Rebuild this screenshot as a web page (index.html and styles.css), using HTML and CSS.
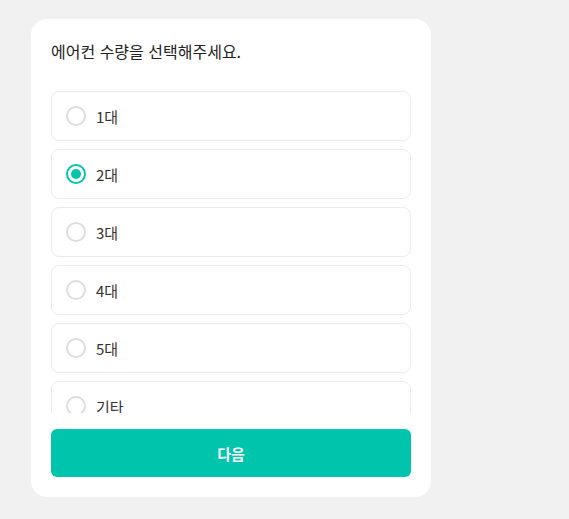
FILE: index.html
```html
<!DOCTYPE html>
<html lang="ko">
<head>
<meta charset="utf-8">
<link rel="stylesheet" href="styles.css">
</head>
<body>
<div class="page">
  <div class="card">
    <h1 class="title">에어컨 수량을 선택해주세요.</h1>
    <div class="list">
      <label class="option"><span class="radio"></span><span class="label">1대</span></label>
      <label class="option"><span class="radio checked"></span><span class="label">2대</span></label>
      <label class="option"><span class="radio"></span><span class="label">3대</span></label>
      <label class="option"><span class="radio"></span><span class="label">4대</span></label>
      <label class="option"><span class="radio"></span><span class="label">5대</span></label>
      <label class="option"><span class="radio"></span><span class="label">기타</span></label>
    </div>
    <button class="next">다음</button>
  </div>
</div>
</body>
</html>
```
FILE: styles.css
```css
html, body {
  margin: 0;
  padding: 0;
  background: #f1f1f1;
  font-family: "Noto Sans CJK KR", "Noto Sans", sans-serif;
}
.page {
  padding: 19px 0 0 31px;
}
.card {
  width: 400px;
  box-sizing: border-box;
  background: #fff;
  border-radius: 16px;
  padding: 20px;
  display: flex;
  flex-direction: column;
}
.title {
  margin: 0;
  font-size: 16px;
  line-height: 24px;
  font-weight: 400;
  color: #222;
}
.list {
  margin-top: 28px;
  height: 322px;
  overflow: hidden;
  display: flex;
  flex-direction: column;
  gap: 8px;
}
.option {
  flex: none;
  height: 50px;
  box-sizing: border-box;
  border: 1px solid #ececec;
  border-radius: 8px;
  display: flex;
  align-items: center;
  padding: 0 14px;
  gap: 10px;
}
.radio {
  width: 20px;
  height: 20px;
  box-sizing: border-box;
  border: 2px solid #dedede;
  border-radius: 50%;
  display: flex;
  align-items: center;
  justify-content: center;
}
.radio.checked {
  border-color: #00c4ac;
}
.radio.checked::after {
  content: "";
  width: 10px;
  height: 10px;
  border-radius: 50%;
  background: #00c4ac;
}
.label {
  font-size: 15px;
  color: #333;
}
.next {
  margin-top: 16px;
  height: 48px;
  border: none;
  border-radius: 6px;
  background: #00c4ac;
  color: #fff;
  font-family: inherit;
  font-size: 15px;
  font-weight: 700;
}
```
